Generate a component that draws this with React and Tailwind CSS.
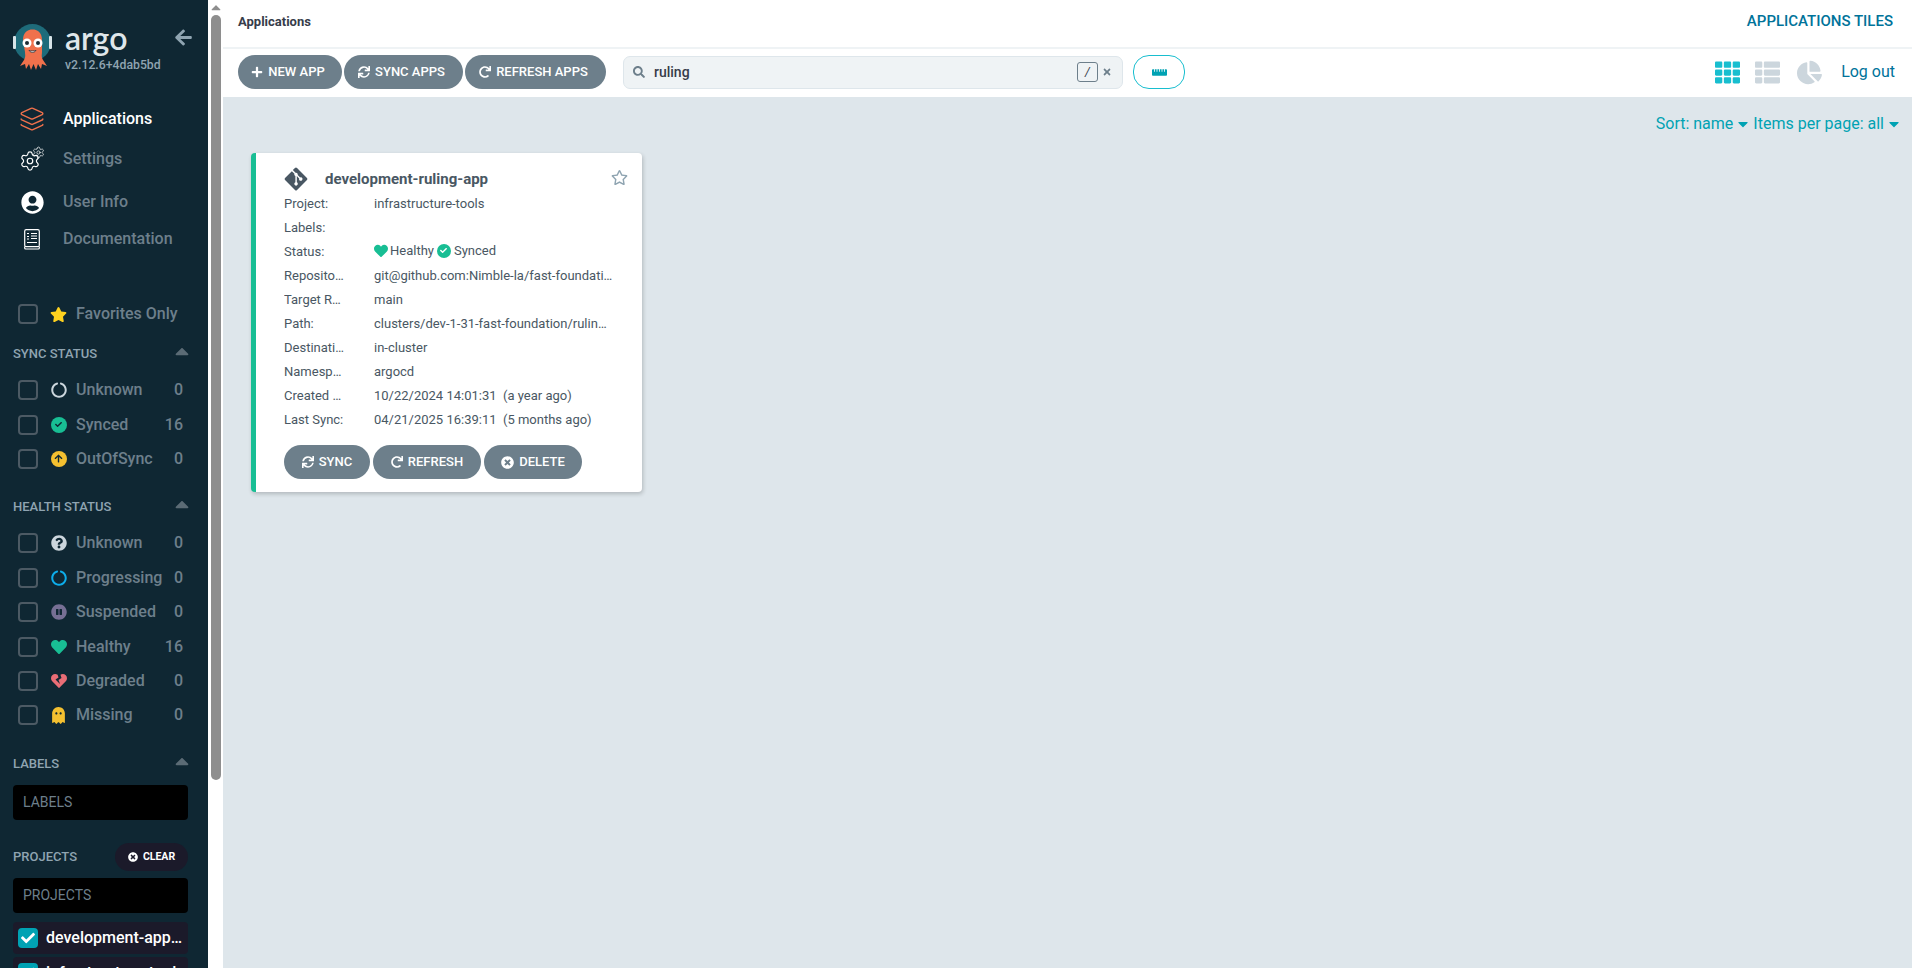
import { FaArrowLeft, FaArrowUp, FaCaretDown, FaCaretUp, FaChartPie, FaCheck, FaCircleNotch, FaGhost, FaGitAlt, FaHeart, FaHeartBroken, FaPlus, FaQuestionCircle, FaPauseCircle, FaRedo, FaRegStar, FaRulerHorizontal, FaSearch, FaStar, FaSync, FaTh, FaThList, FaTimes, FaTimesCircle, FaUserCircle } from 'react-icons/fa'
import { Layers, Settings } from 'lucide-react'

function ArgoLogo() {
  return (
    <svg width="40" height="50" viewBox="0 0 40 50" className="shrink-0">
      <circle cx="19.500" cy="19.500" r="18.500" fill="#1e6b7a" />
      <rect x="0" y="13" width="3" height="13" rx="1" fill="#d8e4e8" />
      <rect x="36" y="13" width="3" height="13" rx="1" fill="#d8e4e8" />
      <path d="M10 17c0-8 5-10.500 9.500-10.500S29 9 29 17v12c0 3-1 4 1 8l4 6-5-2-1 5-3-5-2 6-2.500-6-2.500 6-2-6-3 5-1-5-5 2 4-6c2-4 1-5 1-8z" fill="#f0714c" />
      <circle cx="14" cy="20" r="4.500" fill="#fff" />
      <circle cx="25" cy="20" r="4.500" fill="#fff" />
      <circle cx="14" cy="20" r="2" fill="#1d2b33" />
      <circle cx="25" cy="20" r="2" fill="#1d2b33" />
      <path d="M16 27.500c2 2.500 5 2.500 7 0-2 .5-5 .5-7 0z" fill="#fff" stroke="#1d2b33" strokeWidth=".8" />
    </svg>
  )
}

function DocIcon() {
  return (
    <svg width="16" height="21" viewBox="0 0 16 21" fill="none" stroke="#fff" strokeWidth="1.200">
      <rect x="0.700" y="0.700" width="14.600" height="17" rx="1.500" />
      <path d="M0.700 17.500v1.500a1 1 0 0 0 1 1h12.600a1 1 0 0 0 1-1v-1.500" />
      <path d="M7 4.500h6M7 7h6M7 9.500h6M3 4.500h2M3 7.500h2M3 10h2M3 13.500h10" />
    </svg>
  )
}

function Checkbox({ checked }) {
  if (checked) {
    return (
      <span className="w-5 h-5 rounded bg-[#00a2b3] flex items-center justify-center shrink-0">
        <FaCheck className="text-white text-[14px]" />
      </span>
    )
  }
  return <span className="w-5 h-5 rounded border-2 border-[#4c5a64] shrink-0" />
}

function SyncedDot({ size = 'w-4 h-4', check = 'text-[7px] text-[#0f2733]' }) {
  return (
    <span className={`${size} rounded-full bg-[#18be94] inline-flex items-center justify-center shrink-0`}>
      <FaCheck className={check} />
    </span>
  )
}

function OutOfSyncIcon() {
  return (
    <span className="w-4 h-4 rounded-full bg-[#f4c030] inline-flex items-center justify-center shrink-0">
      <FaArrowUp className="text-[9px] text-[#0f2733]" />
    </span>
  )
}

const syncRows = [
  { label: 'Unknown', count: 0, icon: <FaCircleNotch className="text-[16px] text-[#ccd6dd]" /> },
  { label: 'Synced', count: 16, icon: <SyncedDot /> },
  { label: 'OutOfSync', count: 0, icon: <OutOfSyncIcon /> },
]

const healthRows = [
  { label: 'Unknown', count: 0, icon: <FaQuestionCircle className="text-[16px] text-[#ccd6dd]" /> },
  { label: 'Progressing', count: 0, icon: <FaCircleNotch className="text-[16px] text-[#0dadea]" /> },
  { label: 'Suspended', count: 0, icon: <FaPauseCircle className="text-[16px] text-[#766f94]" /> },
  { label: 'Healthy', count: 16, icon: <FaHeart className="text-[16px] text-[#18be94]" /> },
  { label: 'Degraded', count: 0, icon: <FaHeartBroken className="text-[16px] text-[#e96d76]" /> },
  { label: 'Missing', count: 0, icon: <FaGhost className="text-[17px] text-[#f4c030]" /> },
]

function FilterRow({ row }) {
  return (
    <div className="h-[34.4px] flex items-center pl-[18px] pr-[25px]">
      <Checkbox />
      <span className="w-[17px] ml-3 flex justify-center shrink-0">{row.icon}</span>
      <span className="ml-[9px] text-[16px] font-medium text-[#6d7f8b] flex-1 whitespace-nowrap">{row.label}</span>
      <span className="text-[16px] font-medium text-[#6d7f8b]">{row.count}</span>
    </div>
  )
}

function SectionHeader({ title, className = '' }) {
  return (
    <div className={`h-[26px] flex items-center justify-between pl-[13px] pr-[15px] ${className}`}>
      <span className="text-[13px] font-medium text-[#8fa4b1]">{title}</span>
      <FaCaretUp className="text-[#5b6b75] text-[22px] -mt-1.5" />
    </div>
  )
}

function NavItem({ icon, label, active, className = '' }) {
  return (
    <div className={`flex items-center h-10 ${className}`}>
      <span className="w-[63px] flex justify-center pl-[1px] shrink-0">{icon}</span>
      <span className={`text-[16px] font-medium ${active ? 'text-white' : 'text-[#6d7f8b]'}`}>{label}</span>
    </div>
  )
}

function Sidebar() {
  return (
    <aside className="w-[208px] shrink-0 h-full bg-[#0f2733] overflow-hidden">
      <div className="h-[99px] flex pl-[13px] pt-[23px]">
        <ArgoLogo />
        <div className="ml-3 w-[90px] shrink-0">
          <div className="text-[32px] leading-[30px] font-['Lato'] font-semibold text-[#dfe6ea]">argo</div>
          <div className="text-[12.250px] leading-4 font-medium text-[#8fa4b1] mt-[4px] whitespace-nowrap">v2.12.6+4dab5bd</div>
        </div>
        <FaArrowLeft className="text-[#8fa4b1] text-[19px] ml-[19px] mt-[5px]" />
      </div>
      <div className="h-[189px]">
        <NavItem active label="Applications" icon={<Layers size={26} strokeWidth={1.300} className="text-[#f0714c]" />} />
        <NavItem
          label="Settings"
          icon={
            <span className="relative w-[26px] h-[26px] block">
              <Settings size={22} strokeWidth={1.300} className="text-white absolute left-0 bottom-0" />
              <Settings size={13} strokeWidth={1.300} className="text-white absolute right-0 top-0" />
            </span>
          }
        />
        <NavItem className="mt-[3px]" label="User Info" icon={<FaUserCircle className="text-white text-[23px]" />} />
        <NavItem className="-mt-[3px]" label="Documentation" icon={<DocIcon />} />
      </div>
      <div className="h-[52px] flex items-center pl-[18px]">
        <Checkbox />
        <FaStar className="text-[#ffd21f] text-[17px] ml-3" />
        <span className="ml-[9px] text-[16px] font-medium text-[#6d7f8b]">Favorites Only</span>
      </div>
      <SectionHeader title="SYNC STATUS" className="mt-[1px]" />
      <div className="mt-[6px]">
        {syncRows.map(r => <FilterRow key={r.label} row={r} />)}
      </div>
      <SectionHeader title="HEALTH STATUS" className="mt-[18px]" />
      <div className="mt-[6px]">
        {healthRows.map(r => <FilterRow key={r.label} row={r} />)}
      </div>
      <SectionHeader title="LABELS" className="mt-[18px]" />
      <div className="ml-[13px] mr-5 mt-2 h-[35px] bg-black rounded flex items-center px-[10px] text-[14px] text-[#6d7f8b]">LABELS</div>
      <div className="mt-[23px] h-[28px] flex items-center justify-between pl-[13px] pr-5">
        <span className="text-[13px] font-medium text-[#8fa4b1]">PROJECTS</span>
        <span className="w-[73px] h-[28px] rounded-[14px] bg-[#1b1a2a] flex items-center justify-center gap-[5px] text-white text-[10.500px] font-bold">
          <FaTimesCircle className="text-[10px]" /> CLEAR
        </span>
      </div>
      <div className="ml-[13px] mr-5 mt-[7px] h-[35px] bg-black rounded flex items-center px-[10px] text-[14px] text-[#6d7f8b]">PROJECTS</div>
      <div className="ml-[13px] mr-5 mt-[9px] flex flex-col gap-[3px]">
        <div className="h-8 bg-[#1b1a2a] rounded flex items-center pl-[5px] pr-[2px]">
          <Checkbox checked />
          <span className="ml-2 text-[16px] font-medium text-white truncate">development-applications</span>
        </div>
        <div className="h-8 bg-[#1b1a2a] rounded flex items-center pl-[5px] pr-[2px]">
          <Checkbox checked />
          <span className="ml-2 text-[16px] font-medium text-white truncate">infrastructure-tools</span>
        </div>
      </div>
    </aside>
  )
}

function Scrollbar() {
  return (
    <div className="w-[15px] shrink-0 h-full bg-white pl-[3px] pr-[2px] flex flex-col items-center">
      <FaCaretUp className="text-[#8e8e8e] text-[14px] h-[15px] shrink-0" />
      <div className="w-[10px] h-[765px] rounded-[5px] bg-[#8e8e8e]" />
    </div>
  )
}

function ActionButton({ icon, label, className = '' }) {
  return (
    <button className={`h-[34px] rounded-[17px] bg-[#6d7f8b] text-white text-[13px] font-medium flex items-center justify-center gap-[5px] shrink-0 ${className}`}>
      {icon}
      {label}
    </button>
  )
}

function Toolbar() {
  return (
    <div className="h-[48px] pb-[2px] bg-white flex items-center pl-[15px] pr-[17px] shrink-0">
      <div className="flex gap-[2px]">
        <ActionButton className="w-[104px] pr-1" icon={<FaPlus className="text-[12px]" />} label="NEW APP" />
        <ActionButton className="w-[119px] pr-1" icon={<FaSync className="text-[12px]" />} label="SYNC APPS" />
        <ActionButton className="w-[141px] pr-1" icon={<FaRedo className="text-[12px]" />} label="REFRESH APPS" />
      </div>
      <div className="ml-[17px] w-[500px] h-[33px] rounded-[7px] bg-[#eff3f5] border border-[#dee6eb] flex items-center pl-[9px] pr-[10px]">
        <FaSearch className="text-[#6d7f8b] text-[12px]" />
        <span className="ml-[9px] text-[14px] font-medium text-[#363c4a] flex-1">ruling</span>
        <span className="w-[21px] h-5 rounded-[3px] border border-[#6d7f8b] text-[12px] italic text-[#363c4a] flex items-center justify-center">/</span>
        <FaTimes className="text-[#6d7f8b] text-[10px] ml-[4px]" />
      </div>
      <button className="ml-[10px] w-[52px] h-[34px] rounded-[16px] border border-[#18becf] flex items-center justify-center">
        <FaRulerHorizontal className="text-[#00a2b3] text-[15px]" />
      </button>
      <div className="ml-auto flex items-center">
        <FaTh className="text-[#18becf] text-[25px]" />
        <FaThList className="text-[#ccd6dd] text-[25px] ml-[15px]" />
        <FaChartPie className="text-[#ccd6dd] text-[25px] ml-[17px]" />
        <span className="ml-[19px] text-[16px] text-[#00739a]">Log out</span>
      </div>
    </div>
  )
}

const cardRows = [
  ['Project:', 'infrastructure-tools'],
  ['Labels:', ''],
  ['Status:', null],
  ['Repository:', 'git@github.com:Nimble-la/fast-foundation-clusters.git'],
  ['Target Revision:', 'main'],
  ['Path:', 'clusters/dev-1-31-fast-foundation/ruling-app'],
  ['Destination:', 'in-cluster'],
  ['Namespace:', 'argocd'],
  ['Created At:', '10/22/2024 14:01:31\u00a0\u00a0(a year ago)'],
  ['Last Sync:', '04/21/2025 16:39:11\u00a0\u00a0(5 months ago)'],
]

function AppCard() {
  return (
    <div className="w-[391px] h-[339px] bg-white rounded border-l-[5px] border-[#18be94] shadow-[1px_2px_4px_rgba(0,0,0,0.2)] pl-[28px] pr-[14px]">
      <div className="h-[38px] pt-[13px] flex items-start">
        <FaGitAlt className="text-[#495763] text-[26px] -ml-[1px]" />
        <span className="ml-[16px] mt-[2px] text-[15px] font-bold text-[#495763]">development-ruling-app</span>
        <FaRegStar className="text-[#8fa4b1] text-[17px] ml-auto mt-[3px]" />
      </div>
      <div>
        {cardRows.map(([label, value]) => (
          <div key={label} className="h-6 flex items-center text-[13px] text-[#495763] pt-[2px]">
            <span className="w-[60px] truncate shrink-0">{label}</span>
            <span className="ml-[30px] w-[239px] truncate">
              {value === null ? (
                <span className="inline-flex items-center">
                  <FaHeart className="text-[#18be94] text-[14px] mr-[2px]" />Healthy
                  <SyncedDot size="w-[14px] h-[14px] ml-[3px] mr-[3px]" check="text-[7px] text-white" />Synced
                </span>
              ) : value}
            </span>
          </div>
        ))}
      </div>
      <div className="flex gap-[3px] mt-[14px]">
        <ActionButton className="w-[86px]" icon={<FaSync className="text-[12px]" />} label="SYNC" />
        <ActionButton className="w-[108px]" icon={<FaRedo className="text-[12px]" />} label="REFRESH" />
        <ActionButton className="w-[98px]" icon={<FaTimesCircle className="text-[13px]" />} label="DELETE" />
      </div>
    </div>
  )
}

export default function App() {
  return (
    <div className="h-[968px] w-full flex overflow-hidden bg-white font-['Roboto',sans-serif]">
      <Sidebar />
      <Scrollbar />
      <main className="flex-1 min-w-0 flex flex-col">
        <div className="h-[49px] pb-[4px] bg-white border-b-2 border-[#eff3f5] flex items-center justify-between pl-[15px] pr-[19px] shrink-0">
          <span className="text-[13px] font-bold text-[#363c4a]">Applications</span>
          <span className="text-[15px] font-medium text-[#00739a]">APPLICATIONS TILES</span>
        </div>
        <Toolbar />
        <div className="flex-1 bg-[#dee6eb] pl-[28px] pr-[10px]">
          <div className="flex justify-end items-center h-[54px] text-[16px] text-[#00a2b3]">
            Sort: name<FaCaretDown className="ml-[2px] mr-[2px]" />Items per page: all<FaCaretDown className="ml-[2px]" />
          </div>
          <div className="mt-[2px]">
            <AppCard />
          </div>
        </div>
      </main>
    </div>
  )
}
